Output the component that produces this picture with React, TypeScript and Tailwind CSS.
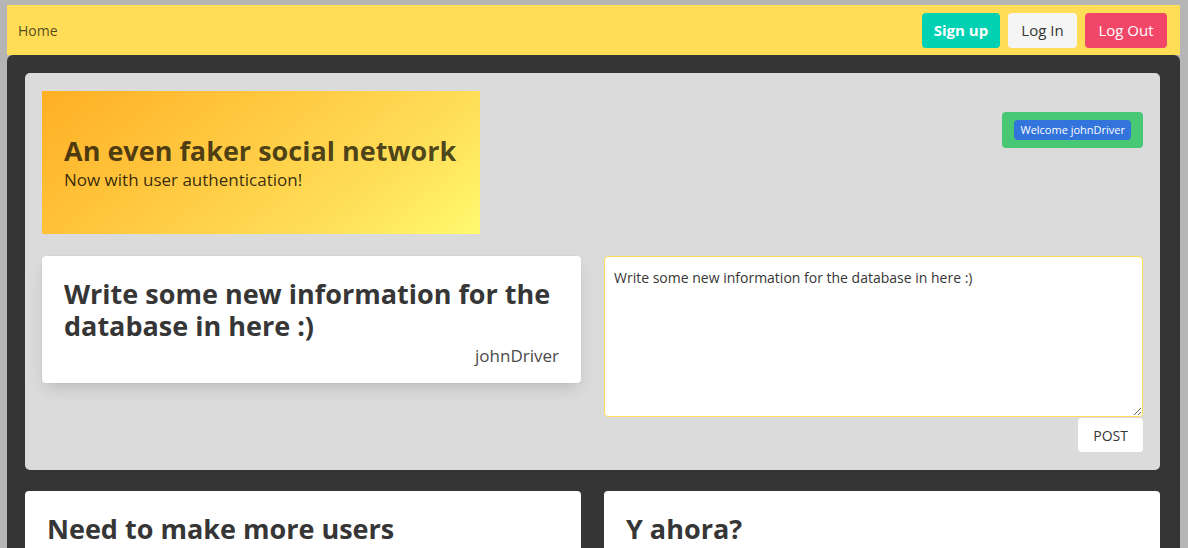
import React from 'react';

const font = { fontFamily: '"Open Sans", "Noto Sans", sans-serif' };

const NavButton: React.FC<{ label: string; className: string }> = ({ label, className }) => (
  <button className={`h-[35px] rounded-[4px] text-[15px] leading-none ${className}`}>{label}</button>
);

export default function App() {
  return (
    <div className="h-[548px] overflow-hidden bg-[#b5b5b5] pl-[7px] pr-[8px] pt-[5px]" style={font}>
      <nav className="flex h-[50px] items-center justify-between bg-[#ffdd57] pl-[11px] pr-[13px]">
        <a className="text-[14px] text-[rgba(0,0,0,0.7)]">Home</a>
        <div className="flex gap-[8px]">
          <NavButton label="Sign up" className="w-[78px] bg-[#00d1b2] font-bold text-white" />
          <NavButton label="Log In" className="w-[69px] bg-[#f5f5f5] text-[#363636]" />
          <NavButton label="Log Out" className="w-[82px] bg-[#f14668] text-white" />
        </div>
      </nav>

      <main className="h-full rounded-t-[6px] bg-[#353535] pl-[18px] pr-[20px] pt-[18px] pb-6">
        <section className="rounded-[5px] bg-[#dbdbdb] px-[17px] pt-[18px] pb-[18px]">
          <div className="flex items-start justify-between">
            <div className="flex h-[143px] w-[438px] flex-col justify-center bg-[linear-gradient(141deg,#ffaf24_0%,#ffdd57_71%,#fffa70_100%)] px-[22px] text-[rgba(0,0,0,0.7)]">
              <h1 className="text-[27px] font-bold leading-[1.2]">An even faker social network</h1>
              <p className="mt-[2px] text-[17px] leading-tight text-[rgba(0,0,0,0.8)]">Now with user authentication!</p>
            </div>
            <div className="mt-[21px] rounded-[4px] bg-[#48c774] px-[12px] py-[8px]">
              <span className="block rounded-[4px] bg-[#3273dc] px-[6px] py-[3px] text-[11px] leading-[14px] text-white">
                Welcome johnDriver
              </span>
            </div>
          </div>

          <div className="mt-[22px] grid grid-cols-2 gap-[23px]">
            <div className="self-start rounded-[4px] bg-white px-[22px] pt-[22px] pb-[14px] shadow-[0_8px_16px_-4px_rgba(10,10,10,0.15),0_0_0_1px_rgba(10,10,10,0.02)]">
              <h2 className="text-[27px] font-bold leading-[32px] text-[#363636]">
                Write some new information for the database in here :)
              </h2>
              <p className="mt-[1px] text-right text-[17px] text-[#4a4a4a]">johnDriver</p>
            </div>
            <div className="flex flex-col items-end">
              <textarea
                className="h-[161px] w-full resize-y rounded-[4px] border border-[#ffdd57] bg-white px-[9px] py-[10px] text-[14px] leading-[1.5] text-[#363636] outline-none"
                defaultValue="Write some new information for the database in here :)"
              />
              <button className="mt-px h-[34px] rounded-[4px] bg-white px-[15px] text-[14px] text-[#363636]">POST</button>
            </div>
          </div>
        </section>

        <div className="mt-[21px] grid grid-cols-2 gap-[23px]">
          <div className="h-[200px] rounded-[4px] bg-white px-[22px] pt-[22px]">
            <h2 className="text-[27px] font-bold leading-[32px] text-[#363636]">Need to make more users</h2>
          </div>
          <div className="h-[200px] rounded-[4px] bg-white px-[22px] pt-[22px]">
            <h2 className="text-[27px] font-bold leading-[32px] text-[#363636]">Y ahora?</h2>
          </div>
        </div>
      </main>
    </div>
  );
}
